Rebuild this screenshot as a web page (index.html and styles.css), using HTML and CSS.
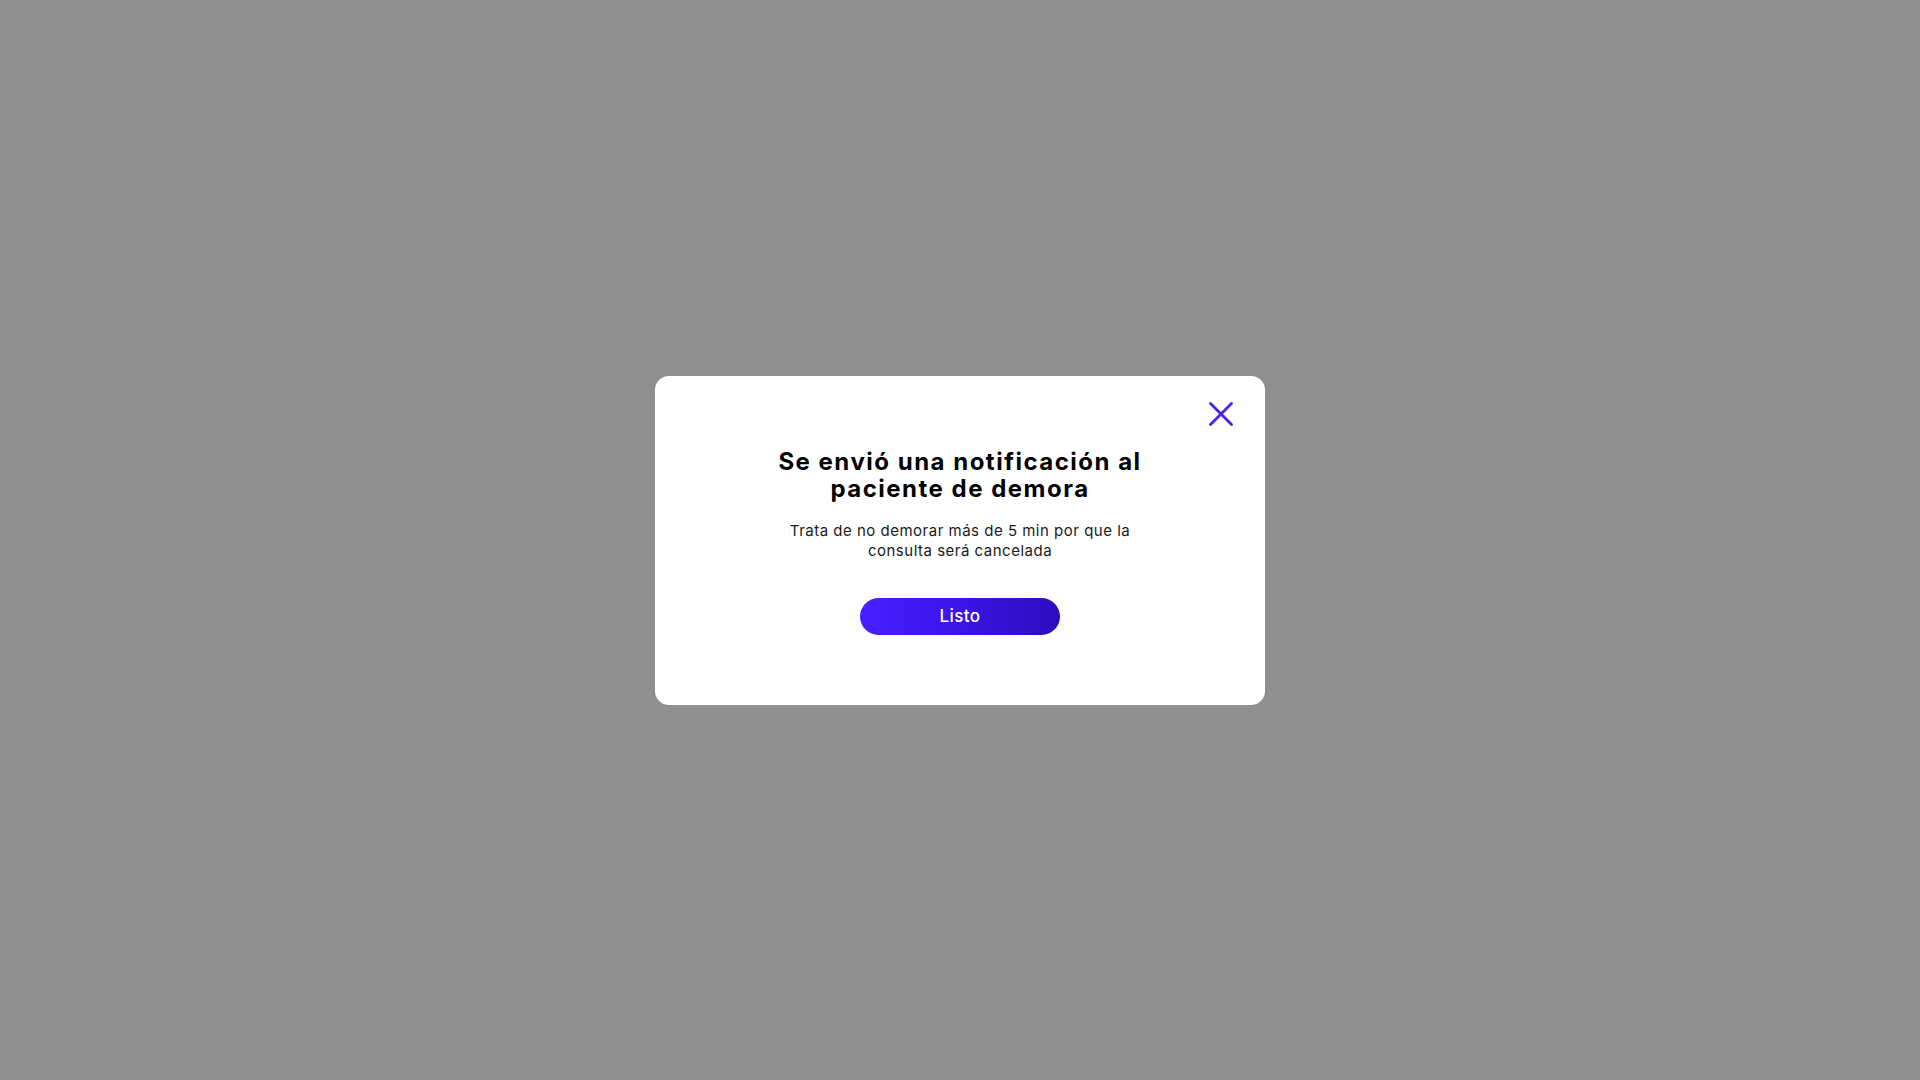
FILE: index.html
```html
<!DOCTYPE html>
<html lang="es">
<head>
<meta charset="utf-8">
<title>Notificación</title>
<link rel="stylesheet" href="styles.css">
</head>
<body>
<div class="overlay">
  <div class="modal">
    <button class="close" aria-label="Cerrar">
      <svg width="24" height="24" viewBox="0 0 24 24"><path d="M1.5 1.5 L22.5 22.5 M22.5 1.5 L1.5 22.5" stroke="#4a1ff5" stroke-width="2.8" stroke-linecap="round" fill="none"/></svg>
    </button>
    <h1 class="title">Se envió una notificación al<br>paciente de demora</h1>
    <p class="text">Trata de no demorar más de 5 min por que la<br>consulta será cancelada</p>
    <button class="btn">Listo</button>
  </div>
</div>
</body>
</html>
```
FILE: styles.css
```css
html, body {
  margin: 0;
  padding: 0;
  height: 100%;
}
body {
  background: #8f8f8f;
  font-family: "Inter", "Open Sans", sans-serif;
}
.overlay {
  height: 100vh;
  display: flex;
  align-items: center;
  justify-content: center;
}
.modal {
  width: 610px;
  box-sizing: border-box;
  background: #ffffff;
  border-radius: 14px;
  padding: 26px 32px 70px;
  display: flex;
  flex-direction: column;
  align-items: center;
}
.close {
  align-self: flex-end;
  width: 24px;
  height: 24px;
  padding: 0;
  border: none;
  background: none;
  cursor: pointer;
  display: block;
}
.close svg { display: block; }
.title {
  margin: 22px 0 0;
  font-size: 24px;
  line-height: 27px;
  font-weight: 700;
  color: #000;
  text-align: center;
  letter-spacing: 1.5px;
}
.text {
  margin: 19px 0 0;
  font-size: 15px;
  line-height: 20px;
  font-weight: 400;
  color: #1a1a1a;
  text-align: center;
  letter-spacing: 0.5px;
}
.btn {
  margin-top: 37px;
  width: 200px;
  height: 37px;
  border: none;
  border-radius: 19px;
  background: linear-gradient(90deg, #4a1fff 0%, #3f17f0 35%, #2c0cbf 100%);
  color: #fff;
  font-family: inherit;
  font-size: 17px;
  font-weight: 500;
  letter-spacing: 0.4px;
  cursor: pointer;
}
```
